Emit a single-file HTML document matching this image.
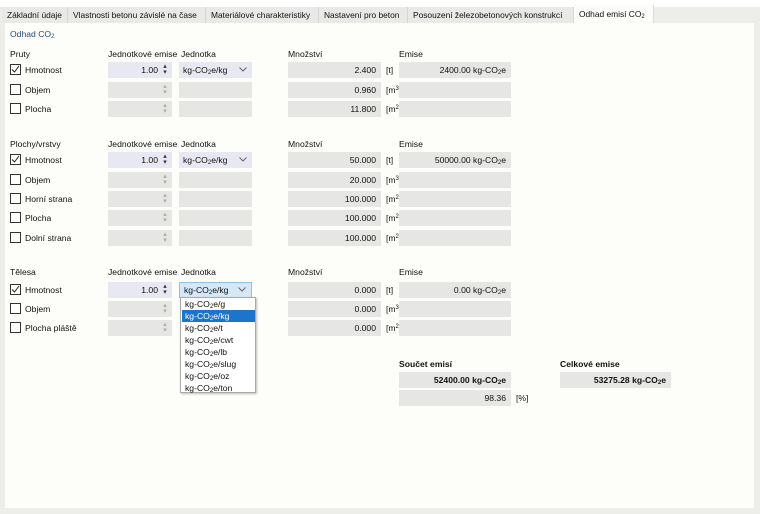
<!DOCTYPE html>
<html><head><meta charset="utf-8"><style>
*{margin:0;padding:0;box-sizing:border-box}
body{width:760px;height:514px;background:#ededea;font-family:"Liberation Sans",Arial,sans-serif;font-size:8.6px;color:#111;position:relative;overflow:hidden}
div{position:absolute}
.top{left:0;top:0;width:760px;height:7px;background:#fff}
.tab{top:7px;height:16px;line-height:16px;background:#e9e9e7;border-right:1px solid #d6d6d6;padding-left:5px;white-space:nowrap;overflow:hidden;font-size:8.4px}
.tab.act{top:5px;height:19px;line-height:19px;background:#fcfcfa;border-right:1px solid #ddd}
.panel{left:5px;top:23px;width:749px;height:485px;background:#fdfdf9}
.h{white-space:nowrap}
.cb{left:10px;width:11px;height:11px;border:1px solid #333;background:#fff}
.l{left:25px;white-space:nowrap}
.box{height:16px;background:#e6e6e4;line-height:16px;text-align:right;padding-right:5px;white-space:nowrap}
.sp{left:108px;width:64px;padding-right:14px}
.sp.a{background:#e8e8f2}
.ar{color:#aaa;font-size:7px;line-height:6px;text-align:center;width:8px;right:3px;top:2px}
.a .ar{color:#333}
.un{left:179px;width:73px;text-align:left;padding-left:4px}
.un.a{background:#e8e8f2}
.chev{position:absolute;right:5px;top:5px}
.q{left:288px;width:93px}
.u{left:386px;white-space:nowrap;width:40px}
.e{left:399px;width:112px}
sub{font-size:6px;vertical-align:-1px}
sup{font-size:6px;vertical-align:3px;line-height:0}
.dd{left:180px;top:297px;width:76px;height:96px;background:#fff;border:1px solid #aaa;box-shadow:1px 1px 2px rgba(0,0,0,.25)}
.it{left:1px;width:73px;height:12px;line-height:12px;padding-left:3px;white-space:nowrap}
.sel{background:#1e73cc;color:#fff}
</style></head><body>
<div class="top"></div>
<div class="tab" style="left:2px;width:66px">Základní údaje</div>
<div class="tab" style="left:68px;width:138px">Vlastnosti betonu závislé na čase</div>
<div class="tab" style="left:206px;width:113px">Materiálové charakteristiky</div>
<div class="tab" style="left:319px;width:89px">Nastavení pro beton</div>
<div class="tab" style="left:408px;width:166px">Posouzení železobetonových konstrukcí</div>
<div class="tab act" style="left:574px;width:80px">Odhad emisí CO<sub>2</sub></div>
<div class="panel"></div>
<div class="h" style="left:10px;top:29px;color:#2a4d7a">Odhad CO<sub>2</sub></div>

<div class="h" style="left:10px;top:49px">Pruty</div>
<div class="h" style="left:108px;top:49px">Jednotkové emise</div>
<div class="h" style="left:181px;top:49px">Jednotka</div>
<div class="h" style="left:288px;top:49px">Množství</div>
<div class="h" style="left:399px;top:49px">Emise</div>

<div class="cb" style="top:64px"><svg width="9" height="9" style="position:absolute;left:0;top:0"><path d="M1 4.5L3.5 7L8 1" stroke="#222" fill="none" stroke-width="1"/></svg></div>
<div class="l" style="top:65px">Hmotnost</div>
<div class="box sp a" style="top:62px">1.00<div class="ar">▴<br>▾</div></div>
<div class="box un a" style="top:62px">kg-CO<sub>2</sub>e/kg<svg class="chev" width="8" height="5"><path d="M0.5 0.5L4 4L7.5 0.5" stroke="#666" fill="none"/></svg></div>
<div class="box q" style="top:62px">2.400</div><div class="u" style="top:65px">[t]</div>
<div class="box e" style="top:62px">2400.00 kg-CO<sub>2</sub>e</div>

<div class="cb" style="top:84px"></div><div class="l" style="top:85px">Objem</div>
<div class="box sp" style="top:82px"><div class="ar">▴<br>▾</div></div><div class="box un" style="top:82px"></div>
<div class="box q" style="top:82px">0.960</div><div class="u" style="top:85px">[m<sup>3</sup>]</div><div class="box e" style="top:82px"></div>

<div class="cb" style="top:103px"></div><div class="l" style="top:104px">Plocha</div>
<div class="box sp" style="top:101px"><div class="ar">▴<br>▾</div></div><div class="box un" style="top:101px"></div>
<div class="box q" style="top:101px">11.800</div><div class="u" style="top:104px">[m<sup>2</sup>]</div><div class="box e" style="top:101px"></div>

<div class="h" style="left:10px;top:139px">Plochy/vrstvy</div>
<div class="h" style="left:108px;top:139px">Jednotkové emise</div>
<div class="h" style="left:181px;top:139px">Jednotka</div>
<div class="h" style="left:288px;top:139px">Množství</div>
<div class="h" style="left:399px;top:139px">Emise</div>

<div class="cb" style="top:154px"><svg width="9" height="9" style="position:absolute;left:0;top:0"><path d="M1 4.5L3.5 7L8 1" stroke="#222" fill="none" stroke-width="1"/></svg></div>
<div class="l" style="top:155px">Hmotnost</div>
<div class="box sp a" style="top:152px">1.00<div class="ar">▴<br>▾</div></div>
<div class="box un a" style="top:152px">kg-CO<sub>2</sub>e/kg<svg class="chev" width="8" height="5"><path d="M0.5 0.5L4 4L7.5 0.5" stroke="#666" fill="none"/></svg></div>
<div class="box q" style="top:152px">50.000</div><div class="u" style="top:155px">[t]</div>
<div class="box e" style="top:152px">50000.00 kg-CO<sub>2</sub>e</div>

<div class="cb" style="top:174px"></div><div class="l" style="top:175px">Objem</div>
<div class="box sp" style="top:172px"><div class="ar">▴<br>▾</div></div><div class="box un" style="top:172px"></div>
<div class="box q" style="top:172px">20.000</div><div class="u" style="top:175px">[m<sup>3</sup>]</div><div class="box e" style="top:172px"></div>

<div class="cb" style="top:193px"></div><div class="l" style="top:194px">Horní strana</div>
<div class="box sp" style="top:191px"><div class="ar">▴<br>▾</div></div><div class="box un" style="top:191px"></div>
<div class="box q" style="top:191px">100.000</div><div class="u" style="top:194px">[m<sup>2</sup>]</div><div class="box e" style="top:191px"></div>

<div class="cb" style="top:212px"></div><div class="l" style="top:213px">Plocha</div>
<div class="box sp" style="top:210px"><div class="ar">▴<br>▾</div></div><div class="box un" style="top:210px"></div>
<div class="box q" style="top:210px">100.000</div><div class="u" style="top:213px">[m<sup>2</sup>]</div><div class="box e" style="top:210px"></div>

<div class="cb" style="top:232px"></div><div class="l" style="top:233px">Dolní strana</div>
<div class="box sp" style="top:230px"><div class="ar">▴<br>▾</div></div><div class="box un" style="top:230px"></div>
<div class="box q" style="top:230px">100.000</div><div class="u" style="top:233px">[m<sup>2</sup>]</div><div class="box e" style="top:230px"></div>

<div class="h" style="left:10px;top:267px">Tělesa</div>
<div class="h" style="left:108px;top:267px">Jednotkové emise</div>
<div class="h" style="left:181px;top:267px">Jednotka</div>
<div class="h" style="left:288px;top:267px">Množství</div>
<div class="h" style="left:399px;top:267px">Emise</div>

<div class="cb" style="top:284px"><svg width="9" height="9" style="position:absolute;left:0;top:0"><path d="M1 4.5L3.5 7L8 1" stroke="#222" fill="none" stroke-width="1"/></svg></div>
<div class="l" style="top:285px">Hmotnost</div>
<div class="box sp a" style="top:282px">1.00<div class="ar">▴<br>▾</div></div>
<div class="box un a" style="top:282px;background:#d6e8f8;border:1px solid #8fc0ea;line-height:14px">kg-CO<sub>2</sub>e/kg<svg class="chev" width="8" height="5" style="top:4px"><path d="M0.5 0.5L4 4L7.5 0.5" stroke="#666" fill="none"/></svg></div>
<div class="box q" style="top:282px">0.000</div><div class="u" style="top:285px">[t]</div>
<div class="box e" style="top:282px">0.00 kg-CO<sub>2</sub>e</div>

<div class="cb" style="top:303px"></div><div class="l" style="top:304px">Objem</div>
<div class="box sp" style="top:301px"><div class="ar">▴<br>▾</div></div>
<div class="box q" style="top:301px">0.000</div><div class="u" style="top:304px">[m<sup>3</sup>]</div><div class="box e" style="top:301px"></div>

<div class="cb" style="top:322px"></div><div class="l" style="top:323px">Plocha pláště</div>
<div class="box sp" style="top:320px"><div class="ar">▴<br>▾</div></div>
<div class="box q" style="top:320px">0.000</div><div class="u" style="top:323px">[m<sup>2</sup>]</div><div class="box e" style="top:320px"></div>

<div class="dd">
<div class="it" style="top:0">kg-CO<sub>2</sub>e/g</div>
<div class="it sel" style="top:12px">kg-CO<sub>2</sub>e/kg</div>
<div class="it" style="top:24px">kg-CO<sub>2</sub>e/t</div>
<div class="it" style="top:36px">kg-CO<sub>2</sub>e/cwt</div>
<div class="it" style="top:48px">kg-CO<sub>2</sub>e/lb</div>
<div class="it" style="top:60px">kg-CO<sub>2</sub>e/slug</div>
<div class="it" style="top:72px">kg-CO<sub>2</sub>e/oz</div>
<div class="it" style="top:84px">kg-CO<sub>2</sub>e/ton</div>
</div>

<div class="h" style="left:399px;top:359px;font-weight:bold">Součet emisí</div>
<div class="box e" style="top:372px;font-weight:bold">52400.00 kg-CO<sub>2</sub>e</div>
<div class="box e" style="top:390px">98.36</div><div class="u" style="top:393px;left:516px">[%]</div>
<div class="h" style="left:560px;top:359px;font-weight:bold">Celkové emise</div>
<div class="box" style="left:560px;width:111px;top:372px;font-weight:bold">53275.28 kg-CO<sub>2</sub>e</div>
</body></html>
